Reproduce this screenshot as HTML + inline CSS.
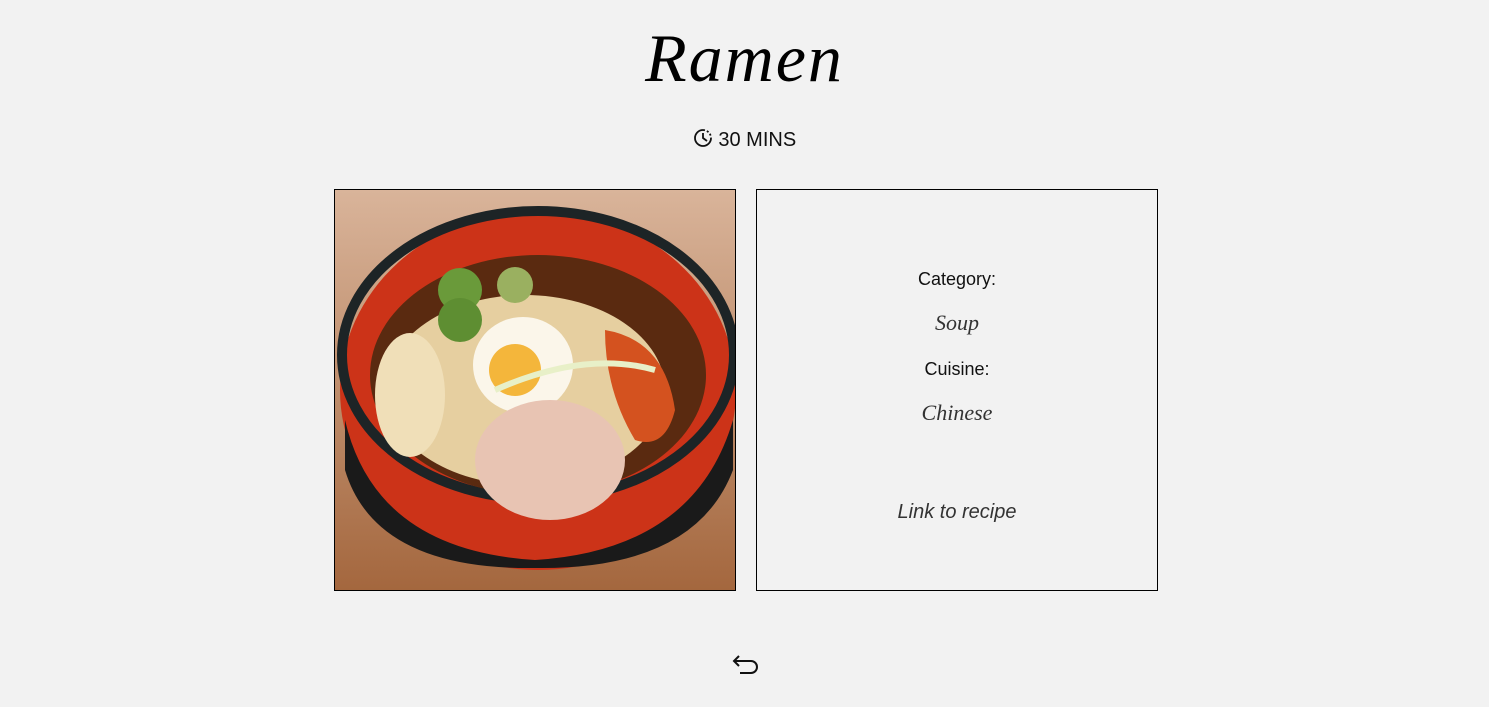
<!DOCTYPE html>
<html><head><meta charset="utf-8"><style>
html,body{margin:0;padding:0;background:#f2f2f2;width:1489px;height:707px;overflow:hidden;font-family:"Liberation Sans",sans-serif;color:#111}
.title{position:absolute;left:0;width:1489px;top:18px;text-align:center;font-family:"Liberation Serif",serif;font-style:italic;font-size:68px;line-height:80px;letter-spacing:2px;color:#000}
.time{position:absolute;left:0;width:1489px;top:128px;text-align:center;font-size:20px;line-height:24px;color:#111}
.box{position:absolute;top:189px;width:400px;height:400px;border:1px solid #000}
.b1{left:334px;overflow:hidden}
.b2{left:756px;text-align:center}
.lbl{position:absolute;left:0;width:400px;font-size:18px;color:#111}
.val{position:absolute;left:0;width:400px;font-family:"Liberation Serif",serif;font-style:italic;font-size:22px;color:#333}
.link{position:absolute;left:0;width:400px;top:311px;font-size:20px;font-style:italic;color:#333}
</style></head><body>
<div class="title">Ramen</div>
<div class="time"><svg width="20" height="20" viewBox="0 0 20 20" style="vertical-align:-2px"><path d="M10 2a8 8 0 1 0 8 8" fill="none" stroke="#111" stroke-width="1.8"/><path d="M10 2a8 8 0 0 1 8 8" fill="none" stroke="#111" stroke-width="1.8" stroke-dasharray="2 2"/><path d="M10 5v5l4 3" fill="none" stroke="#111" stroke-width="1.8"/></svg> 30 MINS</div>
<div class="box b1"><svg width="400" height="400" viewBox="0 0 400 400">
<defs><linearGradient id="w" x1="0" y1="0" x2="0" y2="1"><stop offset="0" stop-color="#d9b49a"/><stop offset="1" stop-color="#a4673e"/></linearGradient></defs>
<rect width="400" height="400" fill="url(#w)"/>
<ellipse cx="203" cy="200" rx="198" ry="180" fill="#cc3318"/>
<path d="M10 230 Q40 360 200 370 Q360 360 398 230 L398 280 Q360 380 200 378 Q40 380 10 280Z" fill="#1a1a1a"/>
<ellipse cx="203" cy="165" rx="196" ry="144" fill="none" stroke="#1d2426" stroke-width="10"/>
<ellipse cx="203" cy="185" rx="168" ry="120" fill="#5a2a10"/>
<ellipse cx="190" cy="200" rx="140" ry="95" fill="#e6cfa0"/>
<ellipse cx="75" cy="205" rx="35" ry="62" fill="#f0dfb8"/>
<ellipse cx="188" cy="175" rx="50" ry="48" fill="#fbf6ea"/>
<circle cx="180" cy="180" r="26" fill="#f4b63b"/>
<ellipse cx="215" cy="270" rx="75" ry="60" fill="#e8c4b3"/>
<path d="M270 140 Q330 150 340 220 Q330 260 300 250 Q270 200 270 140Z" fill="#d4521f"/>
<circle cx="125" cy="100" r="22" fill="#6a9a3a"/><circle cx="125" cy="130" r="22" fill="#5e8e32"/><circle cx="180" cy="95" r="18" fill="#9ab060"/>
<path d="M160 200 Q250 160 320 180" stroke="#e8f0c8" stroke-width="6" fill="none"/>
</svg></div>
<div class="box b2">
<div class="lbl" style="top:79px">Category:</div>
<div class="val" style="top:120px">Soup</div>
<div class="lbl" style="top:169px">Cuisine:</div>
<div class="val" style="top:210px">Chinese</div>
<div class="link">Link to recipe</div>
</div>
<svg style="position:absolute;left:732px;top:655px" width="28" height="22" viewBox="0 0 28 22"><path d="M2 6H19a6 6 0 0 1 0 12H8" fill="none" stroke="#111" stroke-width="2"/><path d="M7 1L2 6l5 5" fill="none" stroke="#111" stroke-width="2"/></svg>
</body></html>
